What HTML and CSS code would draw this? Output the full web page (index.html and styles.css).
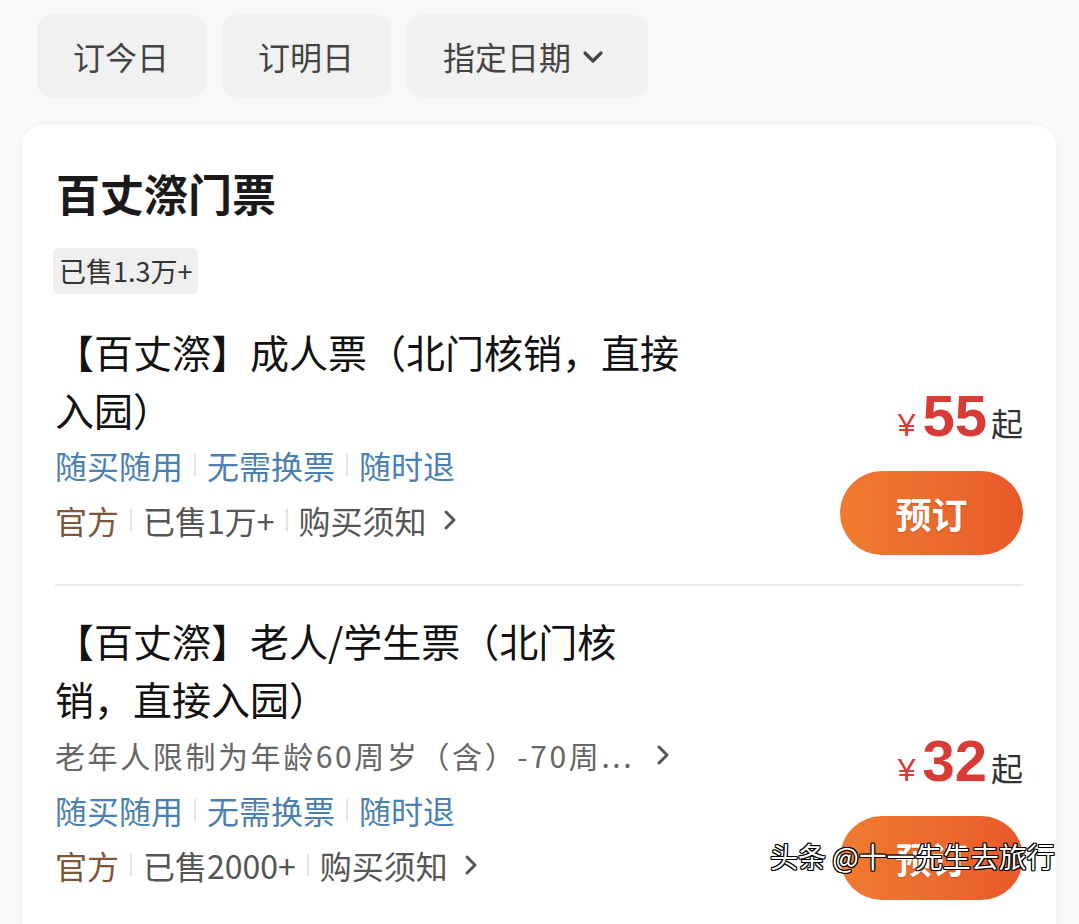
FILE: index.html
```html
<!DOCTYPE html>
<html lang="zh-CN">
<head>
<meta charset="utf-8">
<title>百丈漈门票</title>
<link rel="stylesheet" href="styles.css">
</head>
<body>
<div class="filters">
  <div class="chip">订今日</div>
  <div class="chip">订明日</div>
  <div class="chip chip-date">指定日期<svg class="down" width="22" height="14" viewBox="0 0 22 14"><polyline points="3,3 11,11 19,3" fill="none" stroke="#444" stroke-width="3.2" stroke-linecap="round" stroke-linejoin="round"/></svg></div>
</div>

<div class="card">
  <h1 class="card-title">百丈漈门票</h1>
  <div class="sold-badge">已售1.3万+</div>

  <div class="product first">
    <div class="info">
      <div class="ptitle">【百丈漈】成人票（北门核销，直接入园）</div>
      <div class="tags"><span>随买随用</span><i class="sep"></i><span>无需换票</span><i class="sep"></i><span>随时退</span></div>
      <div class="meta"><span class="official">官方</span><i class="sep"></i><span>已售1万+</span><i class="sep"></i><span>购买须知</span><svg class="chev" width="18" height="26" viewBox="0 0 18 26"><polyline points="5,5 13,13 5,21" fill="none" stroke="#555" stroke-width="3" stroke-linecap="round" stroke-linejoin="round"/></svg></div>
    </div>
    <div class="buy">
      <div class="price"><span class="yen">¥</span><span class="num">55</span><span class="qi">起</span></div>
      <div class="book">预订</div>
    </div>
  </div>

  <div class="product second">
    <div class="info">
      <div class="ptitle">【百丈漈】老人/学生票（北门核销，直接入园）</div>
      <div class="desc"><span>老年人限制为年龄60周岁（含）-70周...</span><svg class="chev" width="18" height="26" viewBox="0 0 18 26"><polyline points="5,5 13,13 5,21" fill="none" stroke="#555" stroke-width="3" stroke-linecap="round" stroke-linejoin="round"/></svg></div>
      <div class="tags"><span>随买随用</span><i class="sep"></i><span>无需换票</span><i class="sep"></i><span>随时退</span></div>
      <div class="meta"><span class="official">官方</span><i class="sep"></i><span>已售2000+</span><i class="sep"></i><span>购买须知</span><svg class="chev" width="18" height="26" viewBox="0 0 18 26"><polyline points="5,5 13,13 5,21" fill="none" stroke="#555" stroke-width="3" stroke-linecap="round" stroke-linejoin="round"/></svg></div>
    </div>
    <div class="buy">
      <div class="price"><span class="yen">¥</span><span class="num">32</span><span class="qi">起</span></div>
      <div class="book">预订</div>
    </div>
  </div>
</div>

<div class="watermark">头条 @十一先生去旅行</div>
</body>
</html>
```

FILE: styles.css
```css
html, body {
  margin: 0;
  padding: 0;
}
body {
  background: #f8f8f8;
  font-family: "Noto Sans CJK SC", "Noto Sans", sans-serif;
  color: #111;
  height: 924px;
  overflow: hidden;
  position: relative;
  text-spacing-trim: space-all;
}

.filters {
  display: flex;
  gap: 16px;
  padding: 15px 0 0 37px;
}
.chip {
  height: 82px;
  display: flex;
  align-items: center;
  padding: 0 37px 0 36px;
  background: #f1f1f1;
  border-radius: 14px;
  font-size: 32px;
  color: #444;
}
.chip-date {
  padding-right: 44px;
}
.chip .down {
  margin-left: 11px;
  margin-top: 2px;
}

.card {
  margin: 28px 23px 0 22px;
  background: #fff;
  border-radius: 22px;
  padding: 40px 33px 0 33px;
  box-shadow: 0 0 6px rgba(0, 0, 0, 0.03);
  min-height: 900px;
}
.card-title {
  margin: 0;
  font-size: 44px;
  line-height: 56px;
  font-weight: 700;
  color: #1a1a1a;
  padding-left: 1px;
}
.sold-badge {
  display: inline-block;
  margin: 27px 0 0 -2px;
  height: 46px;
  line-height: 46px;
  padding: 0 6px;
  background: #efefef;
  border-radius: 6px;
  font-size: 27px;
  color: #333;
}

.product {
  display: flex;
  justify-content: space-between;
  align-items: flex-end;
  padding-top: 28px;
}
.product.first {
  padding-bottom: 29px;
  border-bottom: 2px solid #ebebeb;
}
.product.second {
  padding-top: 25px;
}
.info {
  width: 632px;
  padding-bottom: 7px;
}
.ptitle {
  font-size: 39px;
  line-height: 58px;
  color: #111;
}
.desc {
  display: flex;
  align-items: center;
  font-size: 30px;
  line-height: 56px;
  color: #666;
  white-space: nowrap;
  letter-spacing: 2.6px;
}
.desc .chev {
  margin-left: 20px;
}
.tags {
  display: flex;
  align-items: center;
  font-size: 32px;
  line-height: 54px;
  color: #4a80b3;
}
.meta {
  display: flex;
  align-items: center;
  font-size: 32px;
  line-height: 56px;
  color: #555;
}
.meta .official {
  color: #80553a;
}
.meta .chev {
  margin-left: 14px;
}
.sep {
  display: inline-block;
  width: 2px;
  height: 22px;
  margin: 0 11px 0 11px;
  background: #e3e3e3;
}

.buy {
  display: flex;
  flex-direction: column;
  align-items: flex-end;
}
.price {
  display: flex;
  align-items: baseline;
  line-height: 1;
  margin-bottom: 26px;
}
.yen {
  font-family: "Liberation Sans", sans-serif;
  font-size: 32px;
  color: #d83b35;
  margin-right: 7px;
}
.num {
  font-family: "Liberation Sans", Arial, sans-serif;
  font-weight: 700;
  font-size: 58px;
  color: #d83b35;
}
.qi {
  font-size: 32px;
  color: #333;
  margin-left: 4px;
}
.book {
  width: 183px;
  height: 84px;
  border-radius: 42px;
  background: linear-gradient(90deg, #f07b30 0%, #ec6a2d 55%, #e8582a 100%);
  color: #fff;
  font-size: 36px;
  font-weight: 700;
  display: flex;
  align-items: center;
  justify-content: center;
  text-shadow: 0 1px 2px rgba(140, 50, 10, 0.35);
}

.watermark {
  position: absolute;
  left: 770px;
  top: 836px;
  font-size: 28px;
  line-height: 40px;
  color: #fff;
  white-space: nowrap;
  text-shadow: 1px 0 0 #000, -1px 0 0 #000, 0 1px 0 #000, 0 -1px 0 #000,
    1px 1px 0 #000, -1px -1px 0 #000, 1px -1px 0 #000, -1px 1px 0 #000;
}
```
